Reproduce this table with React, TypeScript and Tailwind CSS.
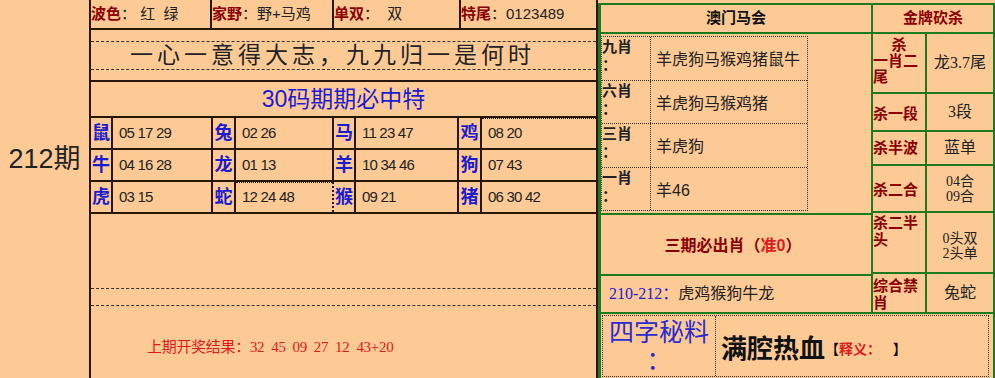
import React from 'react';

const zodiac: [string, string][][] = [
  [['鼠', '05 17 29'], ['兔', '02 26'], ['马', '11 23 47'], ['鸡', '08 20']],
  [['牛', '04 16 28'], ['龙', '01 13'], ['羊', '10 34 46'], ['狗', '07 43']],
  [['虎', '03 15'], ['蛇', '12 24 48'], ['猴', '09 21'], ['猪', '06 30 42']],
];

const colW = [
  ['w-[22px]', 'w-[100px]'],
  ['w-[23px]', 'w-[98px]'],
  ['w-[22px]', 'w-[103px]'],
  ['w-[23px]', 'flex-1'],
];

const picks = [
  { k: '九肖', v: '羊虎狗马猴鸡猪鼠牛' },
  { k: '六肖', v: '羊虎狗马猴鸡猪' },
  { k: '三肖', v: '羊虎狗' },
  { k: '一肖', v: '羊46' },
];

const serif = "font-['Liberation_Serif','Noto_Sans_CJK_SC',serif]";

const App: React.FC = () => {
  return (
    <div className="w-[995px] h-[378px] bg-[#fdca96] flex overflow-hidden font-['Liberation_Sans','Noto_Sans_CJK_SC',sans-serif] text-[#222]">
      {/* period */}
      <div className="w-[89px] shrink-0 flex justify-center pt-[146px]">
        <span className="text-[27px] leading-none">212期</span>
      </div>

      {/* left table */}
      <div className="w-[509px] shrink-0 border-x-2 border-[#2a1608] flex flex-col">
        <div className="h-[30px] flex border-b-2 border-[#2a1608] text-[15px]">
          <div className="w-[121px] border-r-2 border-[#2a1608] flex items-center">
            <span className="text-[#8b0000] font-bold">波色</span>：&nbsp;红&nbsp;&nbsp;绿
          </div>
          <div className="w-[122px] border-r-2 border-[#2a1608] flex items-center">
            <span className="text-[#8b0000] font-bold">家野</span>：野+马鸡
          </div>
          <div className="w-[127px] border-r-2 border-[#2a1608] flex items-center">
            <span className="text-[#8b0000] font-bold">单双</span>：&nbsp;&nbsp;双
          </div>
          <div className="flex-1 flex items-center">
            <span className="text-[#8b0000] font-bold">特尾</span>：0123489
          </div>
        </div>

        <div className="h-[52px] border-b-2 border-[#2a1608] pt-[11px]">
          <div className="h-[29px] border-y border-dashed border-[#333] flex items-center justify-center text-[23px] tracking-[4px] text-[#222] pr-[22px]">
            一心一意得大志，九九归一是何时
          </div>
        </div>

        <div className="h-[36px] border-b-2 border-[#2a1608] flex items-center justify-center text-[23px] text-[#1c1ccf]">
          30码期期必中特
        </div>

        {zodiac.map((row, ri) => (
          <div key={ri} className="h-[32px] flex border-b-2 border-[#2a1608]">
            {row.map(([z, n], ci) => (
              <React.Fragment key={z}>
                <div className={`${colW[ci][0]} shrink-0 border-r-2 border-[#2a1608] flex items-center justify-center text-[18px] font-bold text-[#1c1ccf] ${serif}`}>
                  {z}
                </div>
                <div className={`${colW[ci][1]} ${ci < 3 ? 'border-r-2 border-[#2a1608]' : ''} flex items-center pl-[6px] text-[15px] tracking-[-0.8px] ${ci === 1 && ri === 2 ? 'border-t border-dotted' : ''} ${ci === 3 && ri === 0 ? 'border-t border-dotted' : ''}`}>
                  {n.split(' ').join('\u00a0')}
                </div>
              </React.Fragment>
            ))}
          </div>
        ))}

        <div className="h-[74px]" />
        <div className="h-[18px] border-y border-dashed border-[#333]" />
        <div className="flex-1 flex items-center pl-[56px] pt-[10px]">
          <span className={`text-[#e01a1a] text-[15px] tracking-[-0.3px] ${serif}`}>上期开奖结果：32&nbsp;&nbsp;45&nbsp;&nbsp;09&nbsp;&nbsp;27&nbsp;&nbsp;12&nbsp;&nbsp;43+20</span>
        </div>
      </div>

      {/* right panel */}
      <div className="flex-1 pt-[3px]">
        <div className="h-full border-l-[3px] border-t-2 border-r-2 border-[#1e7a1e] flex flex-col">
          <div className="h-[29px] flex border-b-2 border-[#1e7a1e]">
            <div className="w-[272px] border-r-2 border-[#1e7a1e] flex items-center justify-center font-bold text-[15px] text-[#111]">
              澳门马会
            </div>
            <div className="flex-1 flex items-center justify-center font-bold text-[15px] text-[#8b0000]">
              金牌砍杀
            </div>
          </div>

          <div className="h-[280px] flex border-b-2 border-[#1e7a1e]">
            <div className="w-[272px] border-r-2 border-[#1e7a1e] flex flex-col">
              <div className="h-[179px] pt-[2px] pb-[2px]">
                <div className="w-[207px] h-full border border-dotted border-[#333] flex flex-col">
                  {picks.map((p, i) => (
                    <div key={p.k} className={`flex-1 flex ${i < 3 ? 'border-b border-dotted border-[#333]' : ''}`}>
                      <div className="w-[49px] border-r border-dotted border-[#333] font-bold text-[15px] leading-[18px] pt-[1px]">
                        {p.k}
                        <br />：
                      </div>
                      <div className="flex-1 flex items-center pl-[5px] text-[16px] pt-[4px]">{p.v}</div>
                    </div>
                  ))}
                </div>
              </div>
              <div className="h-[61px] border-t-2 border-[#1e7a1e] flex items-center justify-center text-[16px] font-bold text-[#8b0000] pr-[6px] pt-[2px]">
                三期必出肖（<span className="text-[#e01a1a]">准0</span>）
              </div>
              <div className="flex-1 border-t-2 border-[#1e7a1e] flex items-center pl-[8px] text-[16px]">
                <span className={`text-[#1c1ccf] ${serif}`}>210-212：</span>虎鸡猴狗牛龙
              </div>
            </div>

            <div className="flex-1 flex flex-col text-[#8b0000] font-bold">
              <div className="h-[60px] flex border-b-2 border-[#1e7a1e]">
                <div className="w-[54px] border-r-2 border-[#1e7a1e] text-[15px] leading-[16px] pt-[3px] flex flex-col">
                  <span className="text-center">杀</span>
                  <span>一肖二</span>
                  <span>尾</span>
                </div>
                <div className={`flex-1 flex items-center justify-center text-[16px] font-normal text-[#222] ${serif}`}>龙3.7尾</div>
              </div>
              <div className="h-[38px] flex border-b-2 border-[#1e7a1e]">
                <div className="w-[54px] border-r-2 border-[#1e7a1e] flex items-center text-[15px] pt-[4px]">杀一段</div>
                <div className={`flex-1 flex items-center justify-center text-[16px] font-normal text-[#222] ${serif}`}>3段</div>
              </div>
              <div className="h-[34px] flex border-b-2 border-[#1e7a1e]">
                <div className="w-[54px] border-r-2 border-[#1e7a1e] flex items-center text-[15px]">杀半波</div>
                <div className={`flex-1 flex items-center justify-center text-[16px] font-normal text-[#222] ${serif}`}>蓝单</div>
              </div>
              <div className="h-[47px] flex border-b-2 border-[#1e7a1e]">
                <div className="w-[54px] border-r-2 border-[#1e7a1e] flex items-center text-[15px] pt-[4px]">杀二合</div>
                <div className={`flex-1 flex flex-col items-center justify-center text-[14px] leading-[15px] font-normal text-[#222] ${serif}`}>
                  <span>04合</span>
                  <span>09合</span>
                </div>
              </div>
              <div className="h-[61px] flex border-b-2 border-[#1e7a1e]">
                <div className="w-[54px] border-r-2 border-[#1e7a1e] text-[15px] leading-[17px] pt-[1px]">
                  杀二半
                  <br />头
                </div>
                <div className={`flex-1 flex flex-col items-center justify-center text-[14px] leading-[15px] font-normal text-[#222] pt-[6px] ${serif}`}>
                  <span>0头双</span>
                  <span>2头单</span>
                </div>
              </div>
              <div className="flex-1 flex">
                <div className="w-[54px] border-r-2 border-[#1e7a1e] text-[15px] leading-[17px] pt-[3px]">
                  综合禁
                  <br />肖
                </div>
                <div className={`flex-1 flex items-center justify-center text-[16px] font-normal text-[#222] ${serif}`}>兔蛇</div>
              </div>
            </div>
          </div>

          <div className="flex-1 p-[1px] pr-[4px]">
            <div className="h-full border border-dotted border-[#333] flex">
              <div className="w-[113px] border-r border-dotted border-[#333] flex flex-col items-center text-[#2a2ad0] text-[25px] leading-[28px] pt-[2px]">
                <span>四字秘料</span>
                <span>：</span>
              </div>
              <div className="flex-1 flex items-center pl-[5px] pt-[6px]">
                <span className="text-[26px] font-bold text-[#111]">满腔热血</span>
                <span className="text-[14px] font-bold text-[#111]">【<span className="text-[#e01a1a]">释义：</span>&nbsp;&nbsp;&nbsp;】</span>
              </div>
            </div>
          </div>
        </div>
      </div>
    </div>
  );
};

export default App;
